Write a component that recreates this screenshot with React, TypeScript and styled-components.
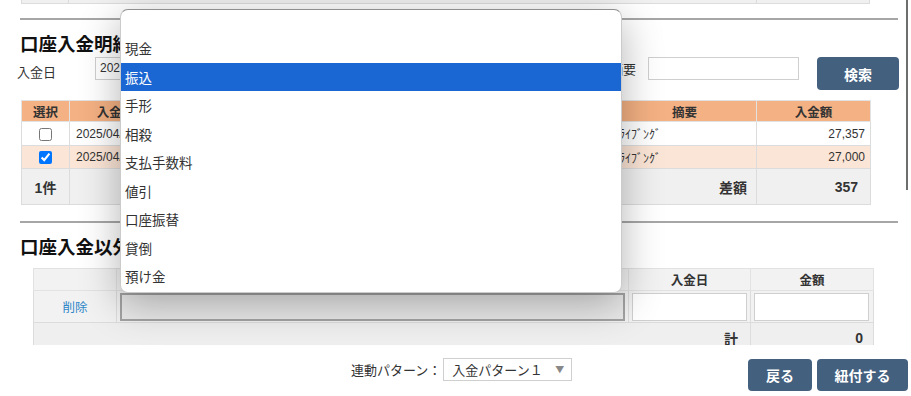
import React from "react";
import styled, { createGlobalStyle } from "styled-components";

const GlobalStyle = createGlobalStyle`
  html, body { margin: 0; padding: 0; background: #fff; }
  body { font-family: "Liberation Sans", "Noto Sans CJK JP", sans-serif; color: #333; }
  * { box-sizing: border-box; }
`;

const JP = `"Noto Sans CJK JP", "Liberation Sans", sans-serif`;

const Page = styled.div`
  position: relative;
  width: 911px;
  height: 396px;
  overflow: hidden;
  background: #fff;
`;

const ScrollArea = styled.div`
  position: relative;
  height: 345px;
  overflow: hidden;
  padding: 0 13px 0 20px;
`;

const ScrollThumb = styled.div`
  position: absolute;
  right: 3px;
  top: 0;
  width: 2px;
  height: 190px;
  background: #6e6e6e;
`;

const PrevTail = styled.div`
  display: grid;
  grid-template-columns: 48px 1fr 114px;
  margin-left: 1px;
  width: 849px;
  height: 4px;
  background: #f0f0f0;
  border-bottom: 1px solid #dcdcdc;
`;

const TailCell = styled.div`
  border-right: 1px solid #dcdcdc;
  border-left: 1px solid #dcdcdc;
`;

const Rule = styled.hr<{ $top?: number }>`
  margin: ${(p) => p.$top ?? 14}px 0 0;
  height: 2px;
  border: none;
  background: #a6a6a6;
`;

const Heading = styled.h2`
  margin: 11px 0 0;
  font-family: ${JP};
  font-size: 18.5px;
  font-weight: 700;
  line-height: 24px;
  color: #111;
`;

const SearchRow = styled.div`
  display: flex;
  align-items: flex-start;
  margin: 2px -1px 0 -3px;
  height: 33px;
`;

const FieldLabel = styled.span<{ $w?: number; $offset?: number }>`
  font-family: ${JP};
  font-size: 13px;
  line-height: 23px;
  padding-top: ${(p) => p.$offset ?? 0}px;
  width: ${(p) => (p.$w ? `${p.$w}px` : "auto")};
  color: #333;
`;

const TextInput = styled.div<{ $w: number; $h?: number }>`
  width: ${(p) => p.$w}px;
  height: ${(p) => p.$h ?? 23}px;
  border: 1px solid #cfcfcf;
  background: #fff;
  font-size: 12px;
  line-height: 21px;
  padding: 0 4px;
  color: #333;
  overflow: hidden;
  white-space: nowrap;
`;

const RightGroup = styled.div`
  margin-left: auto;
  display: flex;
  align-items: flex-start;
  gap: 12px;
`;

const Button = styled.button<{ $w: number; $ml?: number }>`
  width: ${(p) => p.$w}px;
  height: 33px;
  border: none;
  border-radius: 4px;
  background: #44607f;
  color: #fff;
  font-family: ${JP};
  font-weight: 700;
  font-size: 14px;
  padding: 0;
  margin-left: ${(p) => p.$ml ?? 0}px;
`;

const DataTable = styled.table<{ $left: number; $width: number; $top: number }>`
  border-collapse: collapse;
  table-layout: fixed;
  margin-top: ${(p) => p.$top}px;
  margin-left: ${(p) => p.$left}px;
  width: ${(p) => p.$width}px;
  font-size: 12px;
`;

const Th = styled.th<{ $bg: string; $h: number }>`
  background: ${(p) => p.$bg};
  height: ${(p) => p.$h}px;
  border: 1px solid #e2e2e2;
  font-family: ${JP};
  font-weight: 700;
  font-size: 12.5px;
  color: #333;
  padding: 0;
  text-align: center;
`;

const Tr = styled.tr<{ $bg: string; $h: number }>`
  background: ${(p) => p.$bg};
  height: ${(p) => p.$h}px;
`;

const Td = styled.td<{ $align?: string; $bold?: boolean; $pr?: number }>`
  border: 1px solid #dcdcdc;
  padding: 0 ${(p) => p.$pr ?? 6}px 0 6px;
  text-align: ${(p) => p.$align ?? "left"};
  font-weight: ${(p) => (p.$bold ? 700 : 400)};
  font-size: ${(p) => (p.$bold ? 14 : 12)}px;
  color: #333;
  white-space: nowrap;
  overflow: hidden;
  vertical-align: middle;
`;

const Check = styled.input`
  margin: 0;
  width: 13px;
  height: 13px;
  vertical-align: middle;
`;

const LinkText = styled.a`
  color: #2f86c8;
  font-family: ${JP};
  font-size: 12.5px;
  text-decoration: none;
`;

const FakeSelect = styled.div`
  height: 28px;
  border: 2px solid #a3a3a3;
  background: #e9e9e9;
`;

const CellPad = styled.td`
  border: 1px solid #dcdcdc;
  padding: 1px 3px;
`;

const BottomBar = styled.div`
  display: flex;
  align-items: flex-start;
  height: 51px;
  padding: 13px 3px 0 351px;
`;

const PatternLabel = styled.span`
  font-family: ${JP};
  font-size: 13px;
  line-height: 23px;
  color: #333;
  margin-right: 2px;
`;

const PatternSelect = styled.div`
  position: relative;
  width: 129px;
  height: 23px;
  border: 1px solid #cfcfcf;
  font-family: ${JP};
  font-size: 13px;
  line-height: 21px;
  padding-left: 8px;
  color: #333;
`;

const Caret = styled.span`
  position: absolute;
  right: 7px;
  top: 0;
  font-size: 9px;
  color: #888;
`;

const Actions = styled.div`
  margin-left: auto;
  margin-top: 1px;
  display: flex;
  gap: 5px;
`;

const ActionButton = styled(Button)`
  height: 32px;
`;

const Menu = styled.div`
  position: absolute;
  left: 120px;
  top: 9px;
  width: 502px;
  background: #fff;
  border: 1px solid #cbcbcb;
  border-top-color: #8f8f8f;
  border-radius: 8px;
  overflow: hidden;
  box-shadow: 0 10px 40px rgba(0, 0, 0, 0.3);
  padding-bottom: 1px;
`;

const MenuItem = styled.div<{ $active?: boolean; $blank?: boolean }>`
  height: ${(p) => (p.$blank ? 24 : 28.5)}px;
  line-height: ${(p) => (p.$blank ? 24 : 28.5)}px;
  padding-left: 4px;
  font-family: ${JP};
  font-size: 13.5px;
  color: ${(p) => (p.$active ? "#fff" : "#333")};
  background: ${(p) => (p.$active ? "#1a66d2" : "transparent")};
`;

const options = ["現金", "振込", "手形", "相殺", "支払手数料", "値引", "口座振替", "貸倒", "預け金"];

export default function App() {
  return (
    <Page>
      <GlobalStyle />
      <ScrollArea>
        <ScrollThumb />
        <PrevTail>
          <TailCell />
          <div />
          <TailCell />
        </PrevTail>
        <Rule />
        <Heading>口座入金明細</Heading>
        <SearchRow>
          <FieldLabel $w={78} $offset={3}>入金日</FieldLabel>
          <TextInput $w={120}>2025/04/01</TextInput>
          <RightGroup>
            <FieldLabel>摘要</FieldLabel>
            <TextInput $w={151} />
            <Button $w={82} $ml={6}>検索</Button>
          </RightGroup>
        </SearchRow>

        <DataTable $left={1} $width={849} $top={10}>
          <colgroup>
            <col style={{ width: 48 }} />
            <col style={{ width: 92 }} />
            <col style={{ width: 200 }} />
            <col style={{ width: 251 }} />
            <col style={{ width: 144 }} />
            <col style={{ width: 114 }} />
          </colgroup>
          <thead>
            <tr>
              <Th $bg="#f4b183" $h={21}>選択</Th>
              <Th $bg="#f4b183" $h={21}>入金日</Th>
              <Th $bg="#f4b183" $h={21}>入金種別</Th>
              <Th $bg="#f4b183" $h={21}>振込依頼人</Th>
              <Th $bg="#f4b183" $h={21}>摘要</Th>
              <Th $bg="#f4b183" $h={21}>入金額</Th>
            </tr>
          </thead>
          <tbody>
            <Tr $bg="#ffffff" $h={24}>
              <Td $align="center"><Check type="checkbox" readOnly /></Td>
              <Td>2025/04/10</Td>
              <Td>振込</Td>
              <Td>ｶ)ﾗｲﾌﾞﾝｸﾞ</Td>
              <Td>ﾗｲﾌﾞﾝｸﾞ</Td>
              <Td $align="right" $pr={5}>27,357</Td>
            </Tr>
            <Tr $bg="#fbe5d6" $h={23}>
              <Td $align="center"><Check type="checkbox" defaultChecked /></Td>
              <Td>2025/04/10</Td>
              <Td>振込</Td>
              <Td>ｶ)ﾗｲﾌﾞﾝｸﾞ</Td>
              <Td>ﾗｲﾌﾞﾝｸﾞ</Td>
              <Td $align="right" $pr={5}>27,000</Td>
            </Tr>
            <Tr $bg="#f0f0f0" $h={36}>
              <Td $align="center" $bold>1件</Td>
              <Td colSpan={3} />
              <Td $align="right" $bold $pr={9}>差額</Td>
              <Td $align="right" $bold $pr={12}>357</Td>
            </Tr>
          </tbody>
        </DataTable>

        <Rule $top={16} />
        <Heading>口座入金以外の入金</Heading>

        <DataTable $left={13} $width={840} $top={10}>
          <colgroup>
            <col style={{ width: 83 }} />
            <col style={{ width: 512 }} />
            <col style={{ width: 122 }} />
            <col style={{ width: 123 }} />
          </colgroup>
          <thead>
            <tr>
              <Th $bg="#f2f2f2" $h={22} />
              <Th $bg="#f2f2f2" $h={22}>入金種別</Th>
              <Th $bg="#f2f2f2" $h={22}>入金日</Th>
              <Th $bg="#f2f2f2" $h={22}>金額</Th>
            </tr>
          </thead>
          <tbody>
            <Tr $bg="#f2f2f2" $h={32}>
              <Td $align="center"><LinkText>削除</LinkText></Td>
              <CellPad><FakeSelect /></CellPad>
              <CellPad><TextInput $w={115} $h={28} /></CellPad>
              <CellPad><TextInput $w={115} $h={28} /></CellPad>
            </Tr>
            <Tr $bg="#efefef" $h={30}>
              <Td colSpan={3} $align="right" $bold $pr={12}>計</Td>
              <Td $align="right" $bold $pr={10}>0</Td>
            </Tr>
          </tbody>
        </DataTable>
      </ScrollArea>

      <BottomBar>
        <PatternLabel>連動パターン：</PatternLabel>
        <PatternSelect>
          入金パターン１
          <Caret>▼</Caret>
        </PatternSelect>
        <Actions>
          <ActionButton $w={64}>戻る</ActionButton>
          <ActionButton $w={91}>紐付する</ActionButton>
        </Actions>
      </BottomBar>

      <Menu>
        <MenuItem $blank />
        {options.map((o) => (
          <MenuItem key={o} $active={o === "振込"}>{o}</MenuItem>
        ))}
      </Menu>
    </Page>
  );
}
